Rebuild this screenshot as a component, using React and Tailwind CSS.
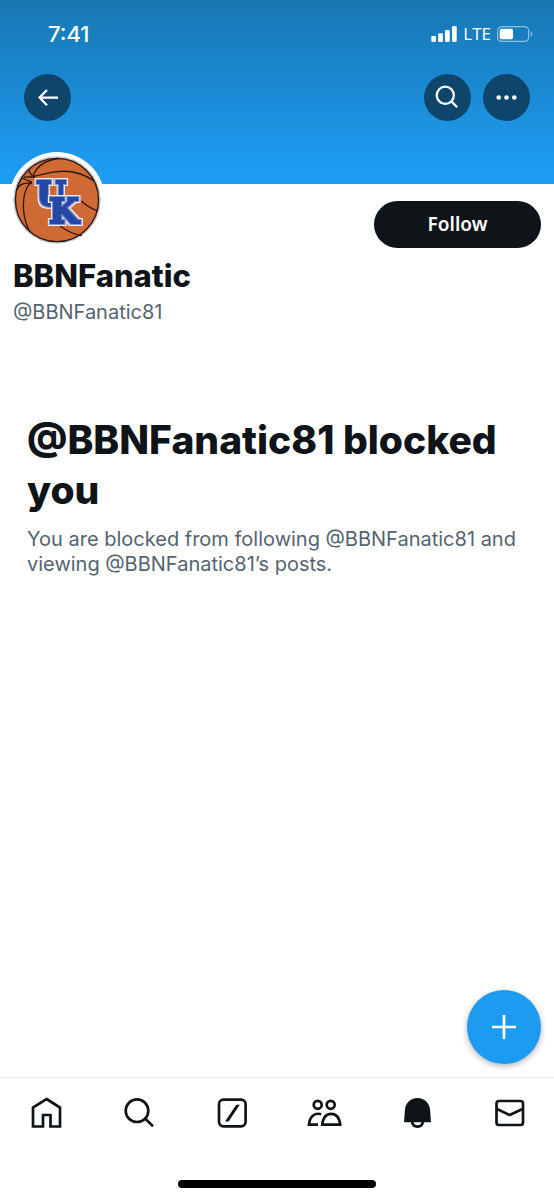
function StatusBar() {
  return (
    <div className="flex items-center justify-between pt-5 pl-12 pr-5 text-white">
      <span className="text-[22px] leading-7 font-medium">7:41</span>
      <div className="flex items-center gap-[6px]">
        <svg width="26" height="16" viewBox="0 0 26 16" fill="currentColor" aria-hidden="true">
          <rect x="0.3" y="10" width="4.7" height="6" rx="1.3" />
          <rect x="7.2" y="7.3" width="4.7" height="8.7" rx="1.3" />
          <rect x="14" y="4" width="4.7" height="12" rx="1.3" />
          <rect x="21" y="0" width="4.7" height="16" rx="1.3" />
        </svg>
        <span className="font-['Open_Sans','Noto_Sans',sans-serif] text-[17px] leading-7 font-medium">LTE</span>
        <svg width="37" height="16" viewBox="0 0 37 16" aria-hidden="true">
          <rect x="0.6" y="0.6" width="31" height="14.8" rx="4" fill="none" stroke="#fff" strokeOpacity="0.5" strokeWidth="1.2" />
          <rect x="2.7" y="2.7" width="13.3" height="10.6" rx="2" fill="#fff" />
          <path d="M33.7 5.3c2 .9 2 4.6 0 5.4z" fill="#fff" fillOpacity="0.5" />
        </svg>
      </div>
    </div>
  );
}

function RoundButton({ label, children }) {
  return (
    <button type="button" aria-label={label} className="size-[47px] rounded-full bg-[#0e466b] text-white">
      <svg viewBox="0 0 47 47" className="size-full" fill="none" stroke="currentColor" strokeWidth="2.2" aria-hidden="true">
        {children}
      </svg>
    </button>
  );
}

function Avatar() {
  return (
    <svg
      viewBox="0 0 88 88"
      className="-mt-7 size-[88px] rounded-full bg-white ring-4 ring-white"
      role="img"
      aria-label="BBNFanatic avatar"
    >
      <defs>
        {/* thin white, blue, then white keylines around each letter */}
        <filter id="keyline" x="-20%" y="-20%" width="140%" height="140%">
          <feMorphology in="SourceAlpha" operator="dilate" radius="2" result="outer" />
          <feFlood floodColor="#f1edf2" />
          <feComposite in2="outer" operator="in" result="rim" />
          <feMorphology in="SourceAlpha" operator="dilate" radius="1" result="inner" />
          <feFlood floodColor="#7e93cc" />
          <feComposite in2="inner" operator="in" result="line" />
          <feMerge>
            <feMergeNode in="rim" />
            <feMergeNode in="line" />
            <feMergeNode in="SourceGraphic" />
          </feMerge>
        </filter>
      </defs>
      <circle cx="44" cy="44" r="43.3" fill="#d5d0d0" stroke="#b9b4b5" strokeWidth="0.8" />
      <circle cx="44" cy="44" r="41.6" fill="#d06a35" stroke="#2a1813" strokeWidth="1.4" />
      <g fill="none" stroke="#2a1813" strokeWidth="1.3">
        <path d="M46 2.5C34 4 24 9 20 20" />
        <path d="M16 14C17 18 19 20 22 22.5" />
        <path d="M11 21C22 22 30 17 42 15.8C56 14 70 17 81 25" />
        <path d="M9 22C13 24 16 25 19 26" />
        <path d="M3.5 34C6 28 11 26 19 27.5" />
        <path d="M18 26C8 36 8 60 17 76" />
        <path d="M68 45C74 50 79 53 85 55" />
        <path d="M47 70C54 75 61 79 69 79.5" />
      </g>
      <g
        fontFamily="'DejaVu Serif', serif"
        fontWeight="700"
        textAnchor="middle"
        fill="#2547a5"
        stroke="#2547a5"
        strokeWidth="2"
      >
        <text x="38" y="50" fontSize="34" filter="url(#keyline)">U</text>
        <text x="51" y="67" fontSize="34" filter="url(#keyline)">K</text>
      </g>
    </svg>
  );
}

const tabs = [
  {
    label: 'Home',
    icon: <path d="M18.5 4L32 12.5V31.5H22.5V20H15V31.5H5V12.5Z" />,
  },
  {
    label: 'Search',
    icon: (
      <>
        <circle cx="16" cy="15.7" r="11.3" />
        <path d="M24 23.5L32 31.3" />
      </>
    ),
  },
  {
    label: 'Grok',
    icon: (
      <>
        <rect x="5" y="4.7" width="26.6" height="26.6" rx="4.5" />
        <path d="M11 26.5L22.2 9.7H25.8L14.6 26.5Z" fill="currentColor" stroke="none" />
      </>
    ),
  },
  {
    label: 'Communities',
    icon: (
      <>
        <circle cx="11.7" cy="9.8" r="4" />
        <circle cx="24.7" cy="9.8" r="4" />
        <path d="M16.2 29.7C17 22.5 20 18.8 25.2 18.8S33.4 22.5 34.2 29.7Z" />
        <path d="M15.2 19.2C9 17.5 3.8 21 3 29.7H12" />
      </>
    ),
  },
  {
    label: 'Notifications',
    icon: (
      <>
        <path d="M18.5 3C11.5 3 6.3 8 5.9 15L5 27.3H32L31.1 15C30.7 8 25.5 3 18.5 3Z" fill="currentColor" stroke="none" />
        <path d="M13 26.5C13.5 30 15.5 31.6 18.5 31.6S23.5 30 24 26.5" />
      </>
    ),
  },
  {
    label: 'Messages',
    icon: (
      <>
        <rect x="4.5" y="6" width="26.5" height="24" rx="2.5" />
        <path d="M4.5 13.8L17.7 20L31 13.8" />
      </>
    ),
  },
];

function TabBar() {
  return (
    <nav className="border-t border-[#e9eaeb] bg-white pt-[17px]">
      <ul className="flex justify-between pl-7 pr-[26px]">
        {tabs.map((tab) => (
          <li key={tab.label}>
            <a href="#" aria-label={tab.label} className="block text-[#0f1419]">
              <svg viewBox="0 0 36 36" className="size-9" fill="none" stroke="currentColor" strokeWidth="2.7" aria-hidden="true">
                {tab.icon}
              </svg>
            </a>
          </li>
        ))}
      </ul>
      <div className="mx-auto mt-[49px] mb-3 h-2 w-[198px] rounded-full bg-black" />
    </nav>
  );
}

export default function App() {
  return (
    <div className="flex min-h-screen flex-col bg-white font-['Inter','Liberation_Sans',sans-serif] text-[#0f1419]">
      <header className="h-[184px] bg-linear-to-b from-[#1877b3] to-[#1d9bf0] to-90%">
        <StatusBar />
        <div className="mt-[26px] flex gap-3 px-6">
          <RoundButton label="Back">
            <path d="M34 23.6H15.5M23 16L15.5 23.6L23 31.2" />
          </RoundButton>
          <div className="flex-1" />
          <RoundButton label="Search">
            <circle cx="21.3" cy="21.3" r="8.6" />
            <path d="M27.4 27.4L33.2 33.2" />
          </RoundButton>
          <RoundButton label="More">
            <g fill="currentColor" stroke="none">
              <circle cx="15.7" cy="23.5" r="2.3" />
              <circle cx="23.5" cy="23.5" r="2.3" />
              <circle cx="31.3" cy="23.5" r="2.3" />
            </g>
          </RoundButton>
        </div>
      </header>

      <main className="relative flex-1">
        <section className="px-[13px]">
          <div className="flex items-start justify-between">
            <Avatar />
            <button type="button" className="mt-[17px] h-[47px] w-[167px] rounded-full bg-[#0f1419] font-['Noto_Sans',sans-serif] text-[19px] font-semibold text-white">
              Follow
            </button>
          </div>
          <h1 className="mt-2 text-[31px] leading-10 font-extrabold">BBNFanatic</h1>
          <p className="text-[20px] leading-8 text-[#536471]">@BBNFanatic81</p>
        </section>

        <section className="mt-[87px] px-[27px]">
          <h2 className="text-[39px] leading-[50px] font-extrabold">@BBNFanatic81 blocked you</h2>
          <p className="mt-3 text-[20px] leading-[25px] text-[#536471]">
            You are blocked from following @BBNFanatic81 and viewing @BBNFanatic81’s posts.
          </p>
        </section>

        <button
          type="button"
          aria-label="New post"
          className="absolute right-[13px] bottom-[13px] size-[74px] rounded-full bg-[#1d9bf0] text-white shadow-[0_2px_6px_rgba(0,0,0,0.3)]"
        >
          <svg viewBox="0 0 74 74" className="size-full" stroke="currentColor" strokeWidth="2.7" aria-hidden="true">
            <path d="M37 25V49M25 37H49" />
          </svg>
        </button>
      </main>

      <TabBar />
    </div>
  );
}
